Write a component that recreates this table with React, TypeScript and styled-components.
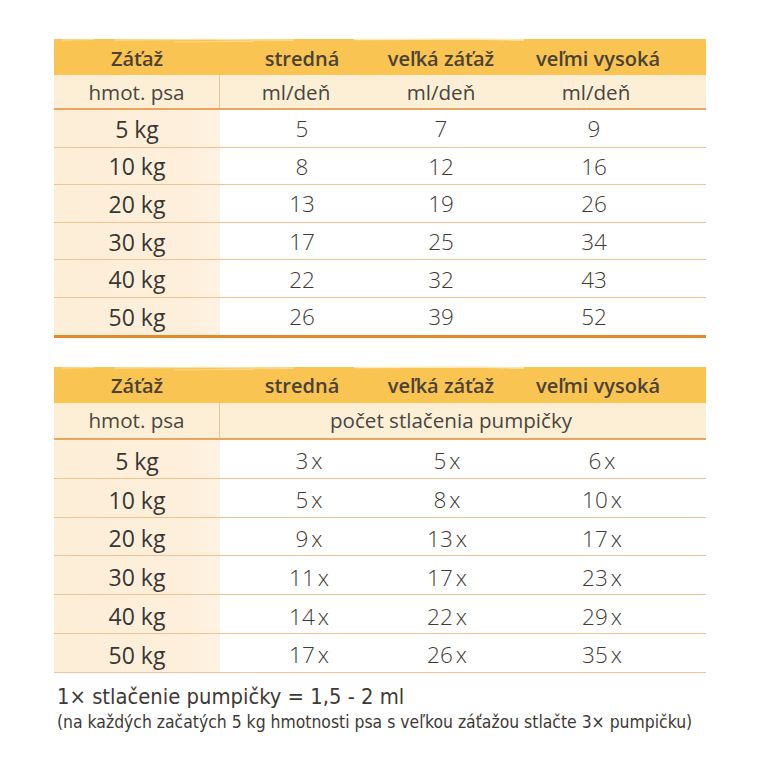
import React from "react";
import styled, { createGlobalStyle } from "styled-components";

const Global = createGlobalStyle`
  *, *::before, *::after { box-sizing: border-box; }
  html, body { margin: 0; padding: 0; background: #ffffff; }
  body { font-family: "Open Sans", "Noto Sans", sans-serif; color: #3e3a36; }
`;

const COLS = "166px 164px 114px 208px";

const Page = styled.div`
  width: 760px;
  height: 762px;
  padding: 39px 0 0 54px;
  display: flex;
  flex-direction: column;
`;

const Table = styled.div<{ $gap?: number }>`
  width: 652px;
  display: flex;
  flex-direction: column;
  margin-bottom: ${(p) => p.$gap ?? 0}px;
`;

const HeaderRow = styled.div`
  position: relative;
  display: grid;
  grid-template-columns: ${COLS};
  height: 36px;
  align-items: center;
  background: #f9c452;
  font-weight: 600;
  font-size: 20px;
  color: #4a4236;
`;

const Streaks = styled.svg`
  position: absolute;
  left: 0;
  top: -2px;
  width: 652px;
  height: 8px;
  pointer-events: none;
`;

const SubRow = styled.div<{ $h: number }>`
  display: grid;
  grid-template-columns: ${COLS};
  height: ${(p) => p.$h}px;
  align-items: stretch;
  background: #fdefd6;
  border-bottom: 2px solid #e8a660;
  font-size: 20.6px;
  color: #4a4540;
`;

const SubCell = styled.div<{ $divider?: boolean; $span?: boolean; $shift?: number }>`
  display: flex;
  align-items: center;
  justify-content: center;
  grid-column: ${(p) => (p.$span ? "2 / 5" : "auto")};
  border-right: ${(p) => (p.$divider ? "1.5px solid #e6c796" : "none")};
  padding-right: ${(p) => p.$shift ?? 0}px;
`;

const HeadCell = styled.div<{ $shift?: number }>`
  text-align: center;
  padding-top: 2px;
  padding-left: ${(p) => (p.$shift && p.$shift > 0 ? p.$shift : 0)}px;
  padding-right: ${(p) => (p.$shift && p.$shift < 0 ? -p.$shift : 0)}px;
  white-space: nowrap;
`;

const BodyRow = styled.div<{ $h: number; $last?: "thick" | "thin" }>`
  display: grid;
  grid-template-columns: ${COLS};
  height: ${(p) => p.$h}px;
  border-bottom: ${(p) =>
    p.$last === "thick" ? "3px solid #e3892c" : "1px solid #f0c495"};
  font-size: 22.5px;
  color: #3f3b37;
`;

const WeightCell = styled.div<{ $drop?: number }>`
  display: flex;
  align-items: center;
  justify-content: center;
  padding-top: ${(p) => p.$drop ?? 1}px;
  background: linear-gradient(90deg, #fdeed8 0%, #feefdc 80%, #fef2e2 100%);
  font-weight: 400;
  font-size: 23px;
  color: #3a3632;
`;

const ValueCell = styled.div<{ $shift?: number; $drop?: number }>`
  display: flex;
  align-items: center;
  justify-content: center;
  padding-top: ${(p) => p.$drop ?? 1}px;
  padding-left: ${(p) => (p.$shift && p.$shift > 0 ? p.$shift : 0)}px;
  padding-right: ${(p) => (p.$shift && p.$shift < 0 ? -p.$shift : 0)}px;
  font-weight: 300;
`;

const Times = styled.span`
  margin-left: 3px;
`;

const Notes = styled.div`
  margin-top: 10px;
  padding-left: 3px;
  display: flex;
  flex-direction: column;
  font-family: "DejaVu Sans Condensed", "DejaVu Sans", sans-serif;
  font-stretch: condensed;
  color: #3e3a36;
`;

const NoteMain = styled.div`
  font-size: 21.8px;
  line-height: 27px;
`;

const NoteSmall = styled.div`
  font-size: 17.4px;
  line-height: 24px;
`;

const HEAD = ["Záťaž", "stredná", "veľká záťaž", "veľmi vysoká"];
const HEAD_SHIFT = [0, 0, 0, -8];
const WEIGHTS = ["5 kg", "10 kg", "20 kg", "30 kg", "40 kg", "50 kg"];
const ML = [
  [5, 7, 9],
  [8, 12, 16],
  [13, 19, 26],
  [17, 25, 34],
  [22, 32, 43],
  [26, 39, 52],
];
const PUMPS = [
  [3, 5, 6],
  [5, 8, 10],
  [9, 13, 17],
  [11, 17, 23],
  [14, 22, 29],
  [17, 26, 35],
];

function Header() {
  return (
    <HeaderRow>
      <Streaks viewBox="0 0 652 8" preserveAspectRatio="none">
        <rect x="0" y="0" width="652" height="2" fill="#ffffff" />
        <path d="M60 3 L150 2.4 L240 3.2" stroke="#fbe3a8" strokeWidth="1.2" fill="none" />
        <path d="M300 2.6 L420 2 L470 3" stroke="#fde9b8" strokeWidth="1.4" fill="none" />
        <path d="M120 5 L200 4.4" stroke="#fbdc98" strokeWidth="0.8" fill="none" />
        <path d="M8 3 L40 2.6" stroke="#fbe0a0" strokeWidth="1" fill="none" />
      </Streaks>
      {HEAD.map((h, i) => (
        <HeadCell key={h} $shift={HEAD_SHIFT[i]}>
          {h}
        </HeadCell>
      ))}
    </HeaderRow>
  );
}

export default function App() {
  return (
    <>
      <Global />
      <Page>
        <Table $gap={29}>
          <Header />
          <SubRow $h={35}>
            <SubCell $divider>hmot. psa</SubCell>
            <SubCell $shift={12}>ml/deň</SubCell>
            <SubCell>ml/deň</SubCell>
            <SubCell $shift={12}>ml/deň</SubCell>
          </SubRow>
          {WEIGHTS.map((w, i) => (
            <BodyRow key={w} $h={i === 5 ? 40 : 37.6} $last={i === 5 ? "thick" : undefined}>
              <WeightCell>{w}</WeightCell>
              {ML[i].map((v, j) => (
                <ValueCell key={j} $shift={j === 2 ? -16 : 0}>
                  {v}
                </ValueCell>
              ))}
            </BodyRow>
          ))}
        </Table>
        <Table>
          <Header />
          <SubRow $h={37}>
            <SubCell $divider>hmot. psa</SubCell>
            <SubCell $span $shift={24}>
              počet stlačenia pumpičky
            </SubCell>
          </SubRow>
          {WEIGHTS.map((w, i) => (
            <BodyRow key={w} $h={38.8} $last={i === 5 ? "thin" : undefined}>
              <WeightCell $drop={4}>{w}</WeightCell>
              {PUMPS[i].map((v, j) => (
                <ValueCell key={j} $drop={4} $shift={j === 0 ? 14 : j === 1 ? 12 : 0}>
                  {v}
                  <Times>x</Times>
                </ValueCell>
              ))}
            </BodyRow>
          ))}
        </Table>
        <Notes>
          <NoteMain>1× stlačenie pumpičky = 1,5 - 2 ml</NoteMain>
          <NoteSmall>
            (na každých začatých 5 kg hmotnosti psa s veľkou záťažou stlačte 3× pumpičku)
          </NoteSmall>
        </Notes>
      </Page>
    </>
  );
}
